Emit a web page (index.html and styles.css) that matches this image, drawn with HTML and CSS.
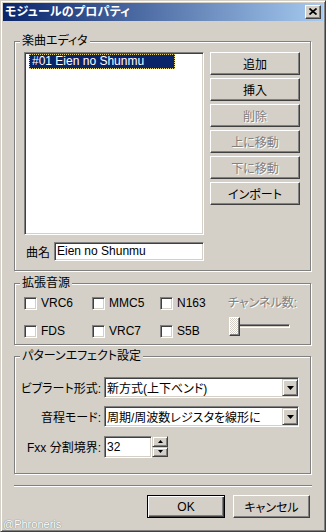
FILE: index.html
```html
<!DOCTYPE html>
<html lang="ja">
<head>
  <meta charset="UTF-8">
  <title>モジュールのプロパティ</title>
  <link rel="stylesheet" href="styles.css">
</head>
<body>

<div class="window">
  <div class="titlebar">
    <span class="title">モジュールのプロパティ</span>
    <span class="close-btn">
      <svg width="8" height="7" viewBox="0 0 8 7"><path d="M0.5 0.5 L7.5 6.5 M7.5 0.5 L0.5 6.5" stroke="#000" stroke-width="1.7" fill="none"/></svg>
    </span>
  </div>

  <div class="client">
    <!-- song editor -->
    <div class="group group-songs">
      <span class="legend">楽曲エディタ</span>
      <div class="songs-left">
        <div class="field listbox">
          <div class="list-item selected">#01 Eien no Shunmu</div>
        </div>
        <div class="name-row">
          <span class="name-label">曲名</span>
          <div class="field textbox">Eien no Shunmu</div>
        </div>
      </div>
      <div class="btn-col">
        <button class="btn">追加</button>
        <button class="btn">挿入</button>
        <button class="btn disabled">削除</button>
        <button class="btn disabled">上に移動</button>
        <button class="btn disabled">下に移動</button>
        <button class="btn">インポート</button>
      </div>
    </div>

    <!-- expansion chips -->
    <div class="group group-ext">
      <span class="legend">拡張音源</span>
      <div class="checks">
        <label class="check"><span class="box"></span>VRC6</label>
        <label class="check"><span class="box"></span>MMC5</label>
        <label class="check"><span class="box"></span>N163</label>
        <label class="check"><span class="box"></span>FDS</label>
        <label class="check"><span class="box"></span>VRC7</label>
        <label class="check"><span class="box"></span>S5B</label>
      </div>
      <div class="channel">
        <span class="disabled-text">チャンネル数:</span>
        <div class="slider">
          <div class="track"></div>
          <div class="thumb"></div>
        </div>
      </div>
    </div>

    <!-- pattern effect settings -->
    <div class="group group-fx">
      <span class="legend">パターンエフェクト設定</span>
      <span class="row-label">ビブラート形式:</span>
      <div class="field combo">
        <span class="combo-text">新方式(上下ベンド)</span>
        <span class="drop-btn"><svg width="7" height="4" viewBox="0 0 7 4"><path d="M0 0 H7 L3.5 4 Z" fill="#000"/></svg></span>
      </div>
      <span class="row-label">音程モード:</span>
      <div class="field combo">
        <span class="combo-text">周期/周波数レジスタを線形に</span>
        <span class="drop-btn"><svg width="7" height="4" viewBox="0 0 7 4"><path d="M0 0 H7 L3.5 4 Z" fill="#000"/></svg></span>
      </div>
      <span class="row-label spin-label">Fxx 分割境界:</span>
      <div class="spin">
        <div class="field spin-edit">32</div>
        <div class="spin-btns">
          <span class="spin-btn"><svg width="5" height="3" viewBox="0 0 5 3"><path d="M2.5 0 L5 3 H0 Z" fill="#000"/></svg></span>
          <span class="spin-btn"><svg width="5" height="3" viewBox="0 0 5 3"><path d="M0 0 H5 L2.5 3 Z" fill="#000"/></svg></span>
        </div>
      </div>
    </div>

    <div class="separator"></div>

    <div class="footer">
      <button class="btn btn-default">OK</button>
      <button class="btn btn-cancel">キャンセル</button>
    </div>
  </div>

  <span class="watermark">@Phroneris</span>
</div>

</body>
</html>
```

FILE: styles.css
```css
body {
  margin: 0;
  background: #d4d0c8;
  font-family: "Liberation Sans", "Noto Sans CJK JP", sans-serif;
  font-size: 12px;
  font-feature-settings: "palt";
  color: #000;
}
.window {
  position: relative;
  width: 326px;
  height: 532px;
  box-sizing: border-box;
  background: #d4d0c8;
  border: 1px solid;
  border-color: #d4d0c8 #404040 #404040 #d4d0c8;
  box-shadow: inset 1px 1px #fff, inset -1px -1px #808080;
  padding: 2px;
}
.titlebar {
  height: 18px;
  background: linear-gradient(to right, #0a246a, #a6caf0);
  display: flex;
  align-items: center;
  justify-content: space-between;
  padding: 0 2px;
}
.title {
  color: #fff;
  font-weight: bold;
  line-height: 18px;
  letter-spacing: 0.2px;
}
.close-btn {
  width: 16px;
  height: 14px;
  box-sizing: border-box;
  background: #d4d0c8;
  border: 1px solid;
  border-color: #fff #404040 #404040 #fff;
  box-shadow: inset -1px -1px #808080;
  display: flex;
  align-items: center;
  justify-content: center;
}
.close-btn svg {
  display: block;
  margin: 0 1px 1px 0;
}
.client {
  padding: 20px 0 0 11px;
}

/* etched group boxes */
.group {
  position: relative;
  width: 297px;
  box-sizing: border-box;
  border: 1px solid #808080;
  box-shadow: inset 1px 1px #fff, 1px 1px #fff;
}
.legend {
  position: absolute;
  top: -8px;
  left: 5px;
  padding: 0 2px;
  background: #d4d0c8;
  line-height: 14px;
}

/* sunken fields */
.field {
  box-sizing: border-box;
  background: #fff;
  border: 1px solid;
  border-color: #808080 #fff #fff #808080;
  box-shadow: inset 1px 1px #404040, inset -1px -1px #d4d0c8;
}

/* buttons */
.btn {
  box-sizing: border-box;
  height: 23px;
  margin: 0;
  padding: 0;
  font: inherit;
  color: #000;
  background: #d4d0c8;
  border: 1px solid;
  border-color: #fff #404040 #404040 #fff;
  box-shadow: inset -1px -1px #808080;
  text-align: center;
}
.btn.disabled, .disabled-text {
  color: #808080;
  text-shadow: 1px 1px 0 #fff;
}
.btn-default {
  width: 78px;
  border: 1px solid #000;
  box-shadow: inset 1px 1px #fff, inset -1px -1px #404040, inset -2px -2px #808080;
}
.btn-cancel {
  width: 77px;
}

.group-songs {
  height: 230px;
  display: grid;
  grid-template-columns: 180px 90px;
  column-gap: 6px;
  padding: 10px 10px 9px 9px;
}
.songs-left {
  display: flex;
  flex-direction: column;
}
.listbox {
  height: 183px;
  padding-top: 1px;
}
.list-item {
  box-sizing: border-box;
  width: 146px;
  height: 15px;
  margin-left: 4px;
  padding-left: 2px;
  line-height: 13px;
}
.list-item.selected {
  background: #0a246a;
  color: #fff;
  border: 1px dotted #e6d27a;
}
.name-row {
  display: flex;
  align-items: center;
  margin-top: 7px;
}
.name-label {
  width: 30px;
  padding-left: 2px;
  box-sizing: border-box;
}
.textbox {
  width: 150px;
  height: 19px;
  padding-left: 2px;
  line-height: 17px;
}
.btn-col {
  display: flex;
  flex-direction: column;
  gap: 3px;
}
.btn-col .btn {
  width: 90px;
}

.group-ext {
  margin-top: 12px;
  height: 62px;
  padding: 13px 0 0 9px;
  display: flex;
}
.checks {
  display: grid;
  grid-template-columns: repeat(3, 68px);
  row-gap: 9px;
}
.check {
  display: flex;
  align-items: center;
  gap: 4px;
  height: 13px;
  line-height: 13px;
}
.box {
  width: 13px;
  height: 13px;
  box-sizing: border-box;
  background: #fff;
  border: 1px solid;
  border-color: #808080 #fff #fff #808080;
  box-shadow: inset 1px 1px #404040, inset -1px -1px #d4d0c8;
}
.channel {
  display: flex;
  flex-direction: column;
  line-height: 13px;
}
.slider {
  position: relative;
  width: 61px;
  height: 19px;
  margin: 7px 0 0 1px;
}
.track {
  position: absolute;
  left: 0;
  right: 0;
  top: 7px;
  height: 4px;
  box-sizing: border-box;
  border: 1px solid;
  border-color: #808080 #fff #fff #808080;
  box-shadow: inset 1px 1px #404040;
}
.thumb {
  position: absolute;
  left: 0;
  top: 0;
  width: 11px;
  height: 19px;
  box-sizing: border-box;
  border: 1px solid;
  border-color: #fff #404040 #404040 #fff;
  box-shadow: inset -1px -1px #808080;
  background: repeating-conic-gradient(#fff 0 25%, #d4d0c8 0 50%) 0 0 / 2px 2px;
}

.group-fx {
  margin-top: 11px;
  height: 118px;
  padding: 20px 11px 15px 0;
  display: grid;
  grid-template-columns: 86px 195px;
  grid-template-rows: 21px 21px 22px;
  column-gap: 3px;
  row-gap: 8px;
}
.row-label {
  align-self: center;
  text-align: right;
  white-space: nowrap;
}
.spin-label {
  margin-top: 1px;
}
.combo {
  display: flex;
  align-items: center;
  padding: 2px 0 2px 2px;
}
.combo-text {
  flex: 1;
  white-space: nowrap;
  overflow: hidden;
}
.drop-btn {
  width: 16px;
  height: 17px;
  box-sizing: border-box;
  background: #d4d0c8;
  border: 1px solid;
  border-color: #d4d0c8 #404040 #404040 #d4d0c8;
  box-shadow: inset 1px 1px #fff, inset -1px -1px #808080;
  display: flex;
  align-items: center;
  justify-content: center;
}
.spin {
  display: flex;
  margin-top: 1px;
}
.spin-edit {
  width: 48px;
  height: 22px;
  padding-left: 2px;
  line-height: 20px;
}
.spin-btns {
  display: flex;
  flex-direction: column;
  width: 16px;
}
.spin-btn {
  height: 11px;
  box-sizing: border-box;
  background: #d4d0c8;
  border: 1px solid;
  border-color: #d4d0c8 #404040 #404040 #d4d0c8;
  box-shadow: inset 1px 1px #fff, inset -1px -1px #808080;
  display: flex;
  align-items: center;
  justify-content: center;
}

.separator {
  margin-top: 11px;
  width: 298px;
  border-top: 1px solid #808080;
  border-bottom: 1px solid #fff;
}
.footer {
  width: 297px;
  box-sizing: border-box;
  display: flex;
  justify-content: flex-end;
  gap: 8px;
  margin-top: 8px;
  padding-right: 1px;
}
.watermark {
  position: absolute;
  left: 2px;
  bottom: 1px;
  font-size: 11px;
  line-height: 12px;
  color: #fff;
  text-shadow: 0 0 1px #888, 0 0 1px #888;
}
```
